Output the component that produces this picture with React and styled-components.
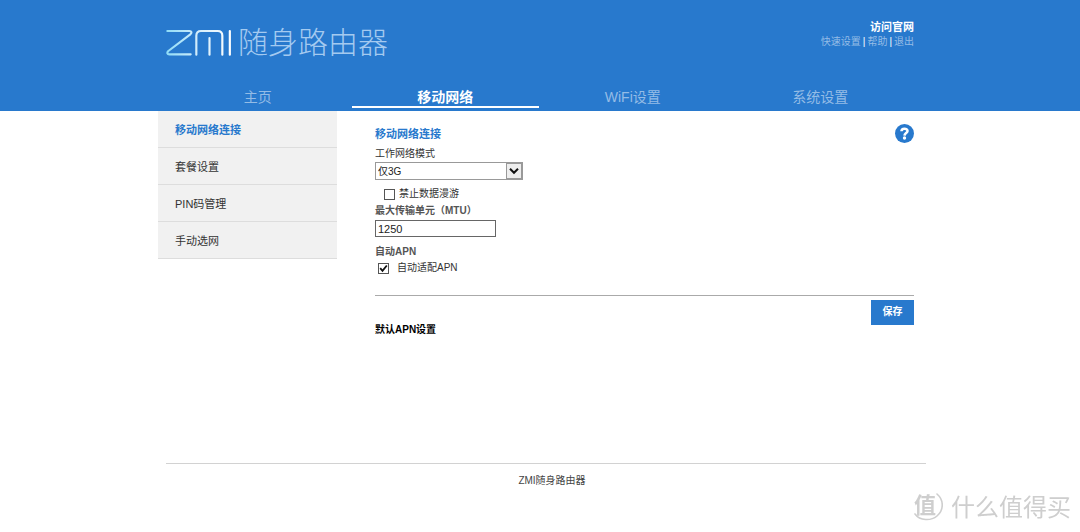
import React, { useState } from 'react';
import styled, { createGlobalStyle, css } from 'styled-components';

const BLUE = '#2879cd';
const PALE = '#94bce6';

const GlobalStyle = createGlobalStyle`
	* {
		box-sizing: border-box;
	}
	body {
		margin: 0;
		background: #fff;
		color: #333;
		font-family: "Liberation Sans", "Noto Sans CJK SC", sans-serif;
		font-size: 10px;
		line-height: 14px;
	}
	a {
		color: inherit;
		text-decoration: none;
	}
`

const StyledHeader = styled.header`
	background: ${BLUE};
	color: ${PALE};
`
const StyledContainer = styled.div`
	width: 100%;
	max-width: 772px;
	margin: 0 auto;
`
const StyledBrandRow = styled.div`
	display: flex;
	justify-content: space-between;
	align-items: flex-start;
	height: 83px;
	padding: 20px 12px 0;
`
const StyledBrand = styled.a`
	display: flex;
	align-items: center;
	gap: 6px;
	height: 44px;
	color: #a4caf0;
	font-family: "Noto Sans CJK SC", sans-serif;
	font-size: 30px;
	font-weight: 300;
	line-height: 40px;
`
const StyledBrandName = styled.span`
	padding-bottom: 4px;
`
const StyledAccount = styled.div`
	text-align: right;
	white-space: nowrap;
`
const StyledOfficial = styled.a`
	color: #fff;
	font-size: 11px;
	font-weight: bold;
`
const StyledSeparator = styled.span`
	color: #fff;
	margin: 0 2px;
`
const StyledNav = styled.nav`
	display: flex;
	height: 28px;
	margin: 0 12px 0 10px;
`
const StyledNavItem = styled.a`
	flex: 1;
	height: 25px;
	font-size: 14px;
	line-height: 28px;
	text-align: center;

	${props => props.$active && css`
		color: #fff;
		font-weight: bold;
		border-bottom: 2px solid #fff;
	`}
`

const StyledBody = styled.div`
	display: flex;
	align-items: flex-start;
	gap: 38px;
	min-height: 352px;
	padding: 0 12px 0 4px;
`
const StyledSidebar = styled.ul`
	flex: 0 0 179px;
	margin: 0;
	padding: 0;
	list-style: none;
	background: #f1f1f1;
`
const StyledSidebarItem = styled.li`
	border-bottom: 1px solid #ddd;
`
const StyledSidebarLink = styled.a`
	display: block;
	padding: 3px 17px 0;
	font-size: 11px;
	line-height: 33px;
	color: ${props => props.$active ? BLUE : '#333'};
	font-weight: ${props => props.$active ? 'bold' : 'normal'};
`

const StyledMain = styled.main`
	flex: 1;
	min-width: 0;
	padding-top: 13px;
`
const StyledTitleRow = styled.div`
	display: flex;
	justify-content: space-between;
	height: 22px;
`
const StyledTitle = styled.h1`
	margin: 0;
	color: ${BLUE};
	font-size: 11px;
	line-height: 20px;
`
const StyledHelp = styled.button`
	width: 19px;
	height: 19px;
	padding: 0;
	border: 0;
	background: none;
	cursor: pointer;

	svg {
		display: block;
	}
`
const StyledLabel = styled.label`
	display: block;
	color: #333;
`
const StyledFieldLabel = styled(StyledLabel)`
	padding-top: 1px;
	line-height: 13px;
	color: ${props => props.$strong ? '#555' : '#333'};
	font-weight: ${props => props.$strong ? 'bold' : 'normal'};
`
const StyledSelectBox = styled.div`
	position: relative;
	width: 148px;
	margin: 2px 0 5px;
`
const fieldStyle = css`
	display: block;
	border-radius: 0;
	background: #fff;
	color: #222;
	font-family: inherit;
`
const StyledSelect = styled.select`
	${fieldStyle}
	appearance: none;
	width: 100%;
	height: 18px;
	padding: 0 20px 0 2px;
	border: 1px solid #999;
	font-size: 10px;
`
const StyledSelectArrow = styled.svg`
	position: absolute;
	top: 1px;
	right: 1px;
	pointer-events: none;
`
const StyledInput = styled.input`
	${fieldStyle}
	width: 121px;
	height: 17px;
	margin: 3px 0 8px;
	padding: 0 2px;
	border: 1px solid #666;
	font-size: 11px;
`
const StyledCheckRow = styled.div`
	display: flex;
	align-items: center;
	gap: ${props => props.$wide ? 8 : 4}px;
	height: 18px;
	padding-left: ${props => props.$wide ? 3 : 9}px;
`
const StyledCheckBox = styled.span`
	position: relative;
	width: 11px;
	height: 11px;

	svg {
		position: absolute;
		top: 0;
		left: 0;
		pointer-events: none;
	}
`
const StyledCheckInput = styled.input`
	appearance: none;
	display: block;
	width: 11px;
	height: 11px;
	margin: 0;
	border: 1px solid #555;
	background: #fff;
`
const StyledGroupTitle = styled.h2`
	margin: 0;
	color: #555;
	font-size: 10px;
	line-height: 14px;
	font-weight: bold;
`
const StyledActions = styled.div`
	display: flex;
	justify-content: flex-end;
	margin-top: 18px;
	padding-top: 4px;
	border-top: 1px solid #aaa;
`
const StyledSave = styled.button`
	width: 43px;
	height: 25px;
	padding: 0 0 4px;
	border: 0;
	background: ${BLUE};
	color: #fff;
	font-family: inherit;
	font-size: 10px;
	font-weight: bold;
	cursor: pointer;
`
const StyledApnTitle = styled(StyledGroupTitle)`
	color: #000;
	line-height: 10px;
`

const StyledFooter = styled.footer`
	margin-left: 12px;
	padding: 10px 0 10px 12px;
	border-top: 1px solid #d2d2d2;
	color: #444;
	text-align: center;
`
const StyledWatermark = styled.div`
	position: fixed;
	right: 9px;
	bottom: 9px;
	display: flex;
	align-items: center;
	gap: 8px;
	color: #cecece;
	font-family: "Noto Sans CJK SC", sans-serif;
	font-size: 24px;
	line-height: 34px;
`
const StyledSeal = styled.span`
	position: relative;
	width: 30px;
	height: 32px;
	padding-left: 1px;
	font-size: 22px;
	font-weight: bold;
	line-height: 26px;

	svg {
		position: absolute;
		top: 0;
		left: 0;
	}
`

const NAV = ['主页', '移动网络', 'WiFi设置', '系统设置'];
const MENU = ['移动网络连接', '套餐设置', 'PIN码管理', '手动选网'];

const ZmiLogo = () => (
	<svg width="66" height="27" viewBox="47 57 198 81" fill="none" role="img" aria-label="ZMI">
		<defs>
			<linearGradient id="zmi" gradientUnits="userSpaceOnUse" x1="48" y1="0" x2="244" y2="0">
				<stop offset="0" stopColor="#8fdcf7"/>
				<stop offset="0.45" stopColor="#d0ecfb"/>
				<stop offset="1" stopColor="#fff"/>
			</linearGradient>
		</defs>
		<g stroke="url(#zmi)" strokeWidth="6.500" strokeLinecap="round" strokeLinejoin="round">
			<path d="M51 63H117C124 63 125 68 120 73L54 123C49 128 51 133 57 133H121"/>
			<path d="M138 134V77Q138 63 152 63H202Q216 63 216 77V134"/>
			<path d="M177.500 84V134"/>
			<path d="M238.500 63V134"/>
		</g>
	</svg>
)

const CheckBox = ({ id, checked, onChange }) => (
	<StyledCheckBox>
		<StyledCheckInput id={id} type="checkbox" checked={checked} onChange={e => onChange(e.target.checked)}/>
		{checked && <svg width="11" height="11" viewBox="0 0 11 11" fill="none" stroke="#111" strokeWidth="1.800">
			<path d="M2.200 5.200L4.500 7.900L8.800 2.500"/>
		</svg>}
	</StyledCheckBox>
)

const Header = () => (
	<StyledHeader>
		<StyledContainer>
			<StyledBrandRow>
				<StyledBrand href="#">
					<ZmiLogo/>
					<StyledBrandName>随身路由器</StyledBrandName>
				</StyledBrand>
				<StyledAccount>
					<StyledOfficial href="#">访问官网</StyledOfficial>
					<div>
						<a href="#">快速设置</a>
						<StyledSeparator>|</StyledSeparator>
						<a href="#">帮助</a>
						<StyledSeparator>|</StyledSeparator>
						<a href="#">退出</a>
					</div>
				</StyledAccount>
			</StyledBrandRow>
			<StyledNav>
				{NAV.map((item, ind) =>
					<StyledNavItem key={item} href="#" $active={ind === 1}>{item}</StyledNavItem>
				)}
			</StyledNav>
		</StyledContainer>
	</StyledHeader>
)

const Sidebar = () => (
	<StyledSidebar>
		{MENU.map((item, ind) =>
			<StyledSidebarItem key={item}>
				<StyledSidebarLink href="#" $active={ind === 0}>{item}</StyledSidebarLink>
			</StyledSidebarItem>
		)}
	</StyledSidebar>
)

const NetworkForm = () => {
	const [roaming, setRoaming] = useState(false);
	const [autoApn, setAutoApn] = useState(true);

	return <StyledMain>
		<StyledTitleRow>
			<StyledTitle>移动网络连接</StyledTitle>
			<StyledHelp type="button" aria-label="帮助">
				<svg width="19" height="19" viewBox="0 0 19 19" fill="none">
					<circle cx="9.500" cy="9.500" r="9.500" fill={BLUE}/>
					<path d="M6.500 7.300C6.500 3.900 12.500 3.900 12.500 7.100C12.500 9.100 9.600 9.100 9.500 11.600" stroke="#fff" strokeWidth="2.600"/>
					<circle cx="9.500" cy="14" r="1.700" fill="#fff"/>
				</svg>
			</StyledHelp>
		</StyledTitleRow>

		<StyledFieldLabel htmlFor="mode">工作网络模式</StyledFieldLabel>
		<StyledSelectBox>
			<StyledSelect id="mode" defaultValue="3g">
				<option value="3g">仅3G</option>
			</StyledSelect>
			<StyledSelectArrow width="16" height="16" viewBox="0 0 16 16" fill="none">
				<rect x="0.500" y="0.500" width="15" height="15" fill="#eee" stroke="#999"/>
				<path d="M4 5.800L8 9.800L12 5.800" stroke="#111" strokeWidth="2"/>
			</StyledSelectArrow>
		</StyledSelectBox>

		<StyledCheckRow>
			<CheckBox id="roaming" checked={roaming} onChange={setRoaming}/>
			<StyledLabel htmlFor="roaming">禁止数据漫游</StyledLabel>
		</StyledCheckRow>

		<StyledFieldLabel htmlFor="mtu" $strong>最大传输单元（MTU）</StyledFieldLabel>
		<StyledInput id="mtu" type="text" defaultValue="1250"/>

		<StyledGroupTitle>自动APN</StyledGroupTitle>
		<StyledCheckRow $wide>
			<CheckBox id="apn" checked={autoApn} onChange={setAutoApn}/>
			<StyledLabel htmlFor="apn">自动适配APN</StyledLabel>
		</StyledCheckRow>

		<StyledActions>
			<StyledSave type="button">保存</StyledSave>
		</StyledActions>
		<StyledApnTitle>默认APN设置</StyledApnTitle>
	</StyledMain>
}

const App = () => (
	<>
		<GlobalStyle/>
		<Header/>
		<StyledContainer>
			<StyledBody>
				<Sidebar/>
				<NetworkForm/>
			</StyledBody>
			<StyledFooter>ZMI随身路由器</StyledFooter>
		</StyledContainer>
		<StyledWatermark>
			<StyledSeal>
				值
				<svg width="30" height="32" viewBox="0 0 30 32" fill="none" stroke="currentColor" strokeLinecap="round">
					<path d="M24 4C31 10 31 20 24 26C18 31 7 31 2 24" strokeWidth="1.600"/>
				</svg>
			</StyledSeal>
			<span>什么值得买</span>
		</StyledWatermark>
	</>
)

export default App
